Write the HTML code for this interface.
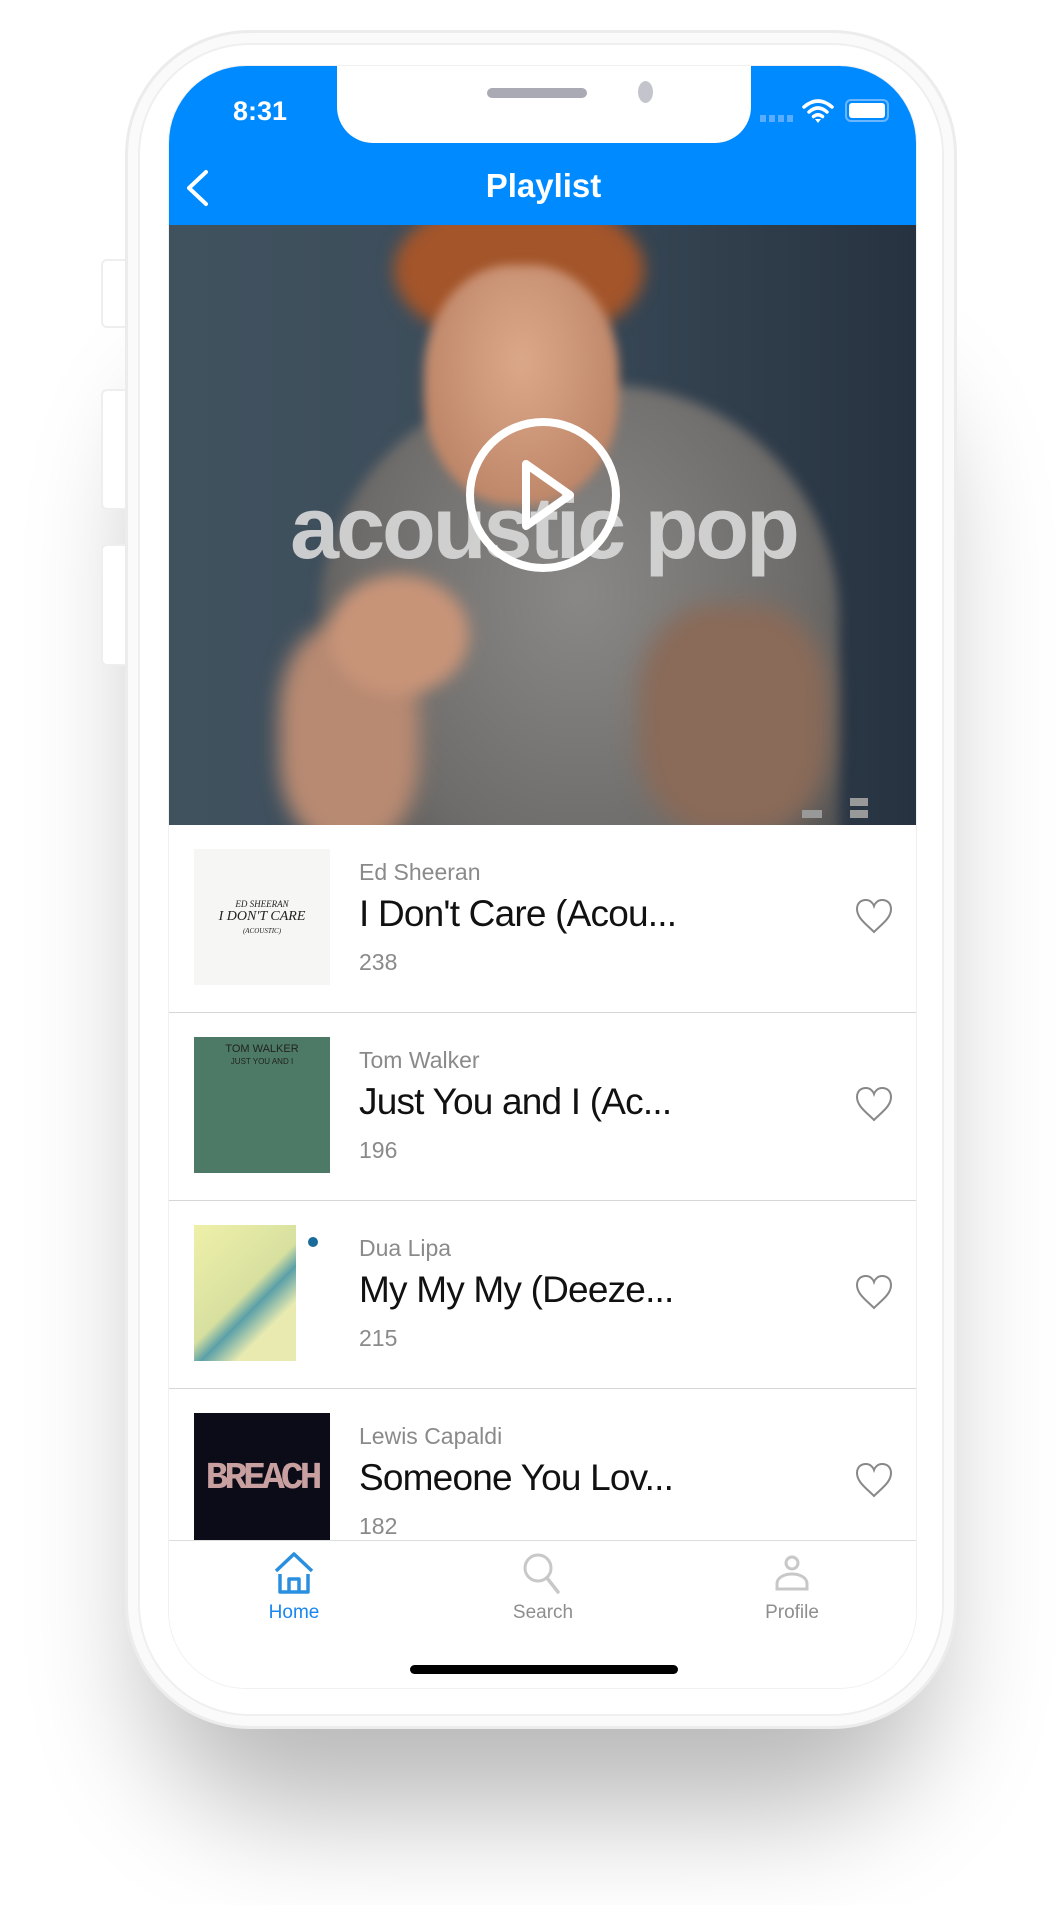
<!DOCTYPE html>
<html><head><meta charset="utf-8"><style>
*{margin:0;padding:0;box-sizing:border-box}
body{width:1059px;height:1905px;background:#fff;position:relative;overflow:hidden;font-family:"Liberation Sans",sans-serif}
.shadow{position:absolute;left:170px;top:300px;width:740px;height:1400px;border-radius:120px;box-shadow:0 90px 120px 20px rgba(0,0,0,0.28)}
.btn{position:absolute;left:101px;width:30px;background:#fff;border:2px solid #eee;border-radius:6px 0 0 6px}
.phone{position:absolute;left:125px;top:30px;width:832px;height:1699px;border-radius:125px;background:#fff;border:3px solid #ececec;box-shadow:inset 0 0 0 10px #fafafa, inset 0 0 0 12px #efefef}
.screen{position:absolute;left:168px;top:65px;width:749px;height:1624px;border-radius:78px;overflow:hidden;background:#fff;border:1px solid #f0f0f0}
.nav{position:absolute;left:0;top:0;width:749px;height:159px;background:#008aff}
.notch{position:absolute;left:168px;top:-2px;width:414px;height:79px;background:#fff;border-radius:0 0 36px 36px}
.hero{position:absolute;left:0;top:159px;width:749px;height:600px;overflow:hidden;background:linear-gradient(90deg,#41525f 0%,#3b4b59 50%,#263240 100%)}
.row{position:absolute;left:0;width:749px;height:188px;border-bottom:1.5px solid #d6d6d6}
.thumb{position:absolute;left:25px;top:24px;width:136px;height:136px}
.artist{position:absolute;left:190px;top:34px;font-size:23px;color:#8a8a8a}
.title{position:absolute;left:190px;top:68px;font-size:37px;color:#111;letter-spacing:-0.8px}
.count{position:absolute;left:190px;top:124px;font-size:23px;color:#8a8a8a}
.heart{position:absolute;left:685px;top:72px}
.tab{position:absolute;top:1474px;width:749px;height:150px;background:#fff;border-top:1.5px solid #ddd}
.tl{position:absolute;top:61px;font-size:19px;color:#8e8e8e;transform:translateX(-50%)}
</style></head><body>
<div class="shadow"></div>
<div class="btn" style="top:259px;height:69px"></div>
<div class="btn" style="top:389px;height:121px"></div>
<div class="btn" style="top:544px;height:122px"></div>
<div class="phone"></div>
<div class="screen">
 <div class="nav">
  <div class="notch"><div style="position:absolute;left:150px;top:24px;width:100px;height:10px;border-radius:5px;background:#aaaab4"></div><div style="position:absolute;left:301px;top:17px;width:15px;height:22px;border-radius:50%;background:#c4c4cc"></div></div>
  <div style="position:absolute;left:64px;top:30px;color:#fff;font-size:27px;font-weight:bold">8:31</div>
  <div style="position:absolute;left:591px;top:49px;width:36px;height:7px;background:repeating-linear-gradient(90deg,#5aacff 0 6px,transparent 6px 9px)"></div>
  <svg style="position:absolute;left:633px;top:32px" width="32" height="26" viewBox="0 0 32 26"><path d="M2 9Q16 -3 30 9M7 14Q16 6 25 14M11.5 18.5Q16 15 20.5 18.5" stroke="#fff" stroke-width="3.5" fill="none" stroke-linecap="round"/><path d="M13 21L16 25L19 21Z" fill="#fff"/></svg>
  <div style="position:absolute;left:676px;top:33px;width:44px;height:23px;border:2px solid #6cb6ff;border-radius:6px;padding:2px"><div style="width:100%;height:100%;background:#fff;border-radius:3px"></div></div>
  <svg style="position:absolute;left:15px;top:103px" width="26" height="38" viewBox="0 0 26 38"><path d="M22 3L5 19L22 35" stroke="#fff" stroke-width="4" fill="none" stroke-linecap="round" stroke-linejoin="round"/></svg>
  <div style="position:absolute;left:0;width:749px;top:101px;text-align:center;color:#fff;font-size:33px;font-weight:bold">Playlist</div>
 </div>
 <div class="hero">
  <div style="position:absolute;left:150px;top:160px;width:520px;height:520px;border-radius:45% 45% 10% 10%;background:radial-gradient(ellipse at 50% 40%,#8a8886,#6e6c6a 60%,#4a4a4a);filter:blur(6px)"></div>
  <div style="position:absolute;left:225px;top:-30px;width:250px;height:150px;border-radius:50%;background:#a4552a;filter:blur(8px)"></div>
  <div style="position:absolute;left:255px;top:40px;width:195px;height:240px;border-radius:45%;background:radial-gradient(ellipse at 50% 40%,#dca88a,#b47a5c);filter:blur(5px)"></div>
  <div style="position:absolute;left:110px;top:400px;width:140px;height:220px;border-radius:40%;background:#b88a72;filter:blur(10px)"></div>
  <div style="position:absolute;left:470px;top:380px;width:190px;height:230px;border-radius:40%;background:#8a6a58;filter:blur(12px)"></div>
  <div style="position:absolute;left:160px;top:350px;width:140px;height:120px;border-radius:50%;background:#c89478;filter:blur(8px)"></div>
  <div style="position:absolute;left:0;width:749px;top:252px;text-align:center;font-size:88px;font-weight:bold;color:rgba(215,215,215,0.92);letter-spacing:-3px">acoustic pop</div>
  <svg style="position:absolute;left:295px;top:191px" width="158" height="158" viewBox="0 0 158 158"><circle cx="79" cy="79" r="73" stroke="#fff" stroke-width="8" fill="none"/><path d="M62 48L106 79L62 110Z" stroke="#fff" stroke-width="8" fill="none" stroke-linejoin="round"/></svg>
  <div style="position:absolute;left:633px;top:585px;width:20px;height:8px;background:#999"></div>
  <div style="position:absolute;left:681px;top:573px;width:18px;height:8px;background:#999"></div>
  <div style="position:absolute;left:681px;top:585px;width:18px;height:8px;background:#999"></div>
 </div>
 <div class="row" style="top:759px">
  <div class="thumb" style="background:#f6f6f4"><div style="position:absolute;left:0;width:136px;top:50px;text-align:center;font-size:9px;font-family:'Liberation Serif',serif;color:#222;font-style:italic">ED SHEERAN<br><span style="font-size:14px">I DON'T CARE</span><br><span style="font-size:7px">(ACOUSTIC)</span></div></div>
  <div class="artist">Ed Sheeran</div><div class="title">I Don't Care (Acou...</div><div class="count">238</div>
  <svg class="heart" width="40" height="40" viewBox="0 0 40 40"><path d="M20 35C12 27 3 21 3 12C3 6 7 3 12 3C16 3 19 6 20 9C21 6 24 3 28 3C33 3 37 6 37 12C37 21 28 27 20 35Z" stroke="#888" stroke-width="2" fill="none"/></svg>
 </div>
 <div class="row" style="top:947px">
  <div class="thumb" style="background:#4d7a66"><div style="position:absolute;left:0;width:136px;top:6px;text-align:center;font-size:11px;color:#222">TOM WALKER<br><span style="font-size:8px">JUST YOU AND I</span></div></div>
  <div class="artist">Tom Walker</div><div class="title">Just You and I (Ac...</div><div class="count">196</div>
  <svg class="heart" width="40" height="40" viewBox="0 0 40 40"><path d="M20 35C12 27 3 21 3 12C3 6 7 3 12 3C16 3 19 6 20 9C21 6 24 3 28 3C33 3 37 6 37 12C37 21 28 27 20 35Z" stroke="#888" stroke-width="2" fill="none"/></svg>
 </div>
 <div class="row" style="top:1135px">
  <div class="thumb" style="background:#fff"><div style="position:absolute;left:0;top:0;width:102px;height:136px;background:linear-gradient(135deg,#eef0a8,#d8e0a0 50%,#5aa0a8 60%,#e8eab0 75%)"></div><div style="position:absolute;left:114px;top:12px;width:10px;height:10px;border-radius:50%;background:#1a6a9a"></div></div>
  <div class="artist">Dua Lipa</div><div class="title">My My My (Deeze...</div><div class="count">215</div>
  <svg class="heart" width="40" height="40" viewBox="0 0 40 40"><path d="M20 35C12 27 3 21 3 12C3 6 7 3 12 3C16 3 19 6 20 9C21 6 24 3 28 3C33 3 37 6 37 12C37 21 28 27 20 35Z" stroke="#888" stroke-width="2" fill="none"/></svg>
 </div>
 <div class="row" style="top:1323px;border:none">
  <div class="thumb" style="background:#0c0c18"><div style="position:absolute;left:0;width:136px;top:44px;text-align:center;font-size:38px;font-weight:bold;color:#c9a0a0;font-family:'Liberation Mono',monospace;letter-spacing:-4px">BREACH</div></div>
  <div class="artist">Lewis Capaldi</div><div class="title">Someone You Lov...</div><div class="count">182</div>
  <svg class="heart" width="40" height="40" viewBox="0 0 40 40"><path d="M20 35C12 27 3 21 3 12C3 6 7 3 12 3C16 3 19 6 20 9C21 6 24 3 28 3C33 3 37 6 37 12C37 21 28 27 20 35Z" stroke="#888" stroke-width="2" fill="none"/></svg>
 </div>
 <div class="tab">
  <svg style="position:absolute;left:104px;top:10px" width="42" height="44" viewBox="0 0 42 44"><path d="M3 20L21 3L39 20M7 23V41H35V23M16 41V28H26V41" stroke="#2b8fe0" stroke-width="3.5" fill="none" stroke-linejoin="round"/></svg>
  <div class="tl" style="left:125px;color:#1a86f0">Home</div>
  <svg style="position:absolute;left:352px;top:10px" width="42" height="44" viewBox="0 0 42 44"><circle cx="17" cy="17" r="13" stroke="#c8c8c8" stroke-width="3" fill="none"/><path d="M26 27L37 41" stroke="#c8c8c8" stroke-width="3.5" stroke-linecap="round"/></svg>
  <div class="tl" style="left:374px">Search</div>
  <svg style="position:absolute;left:602px;top:10px" width="42" height="44" viewBox="0 0 42 44"><circle cx="21" cy="12" r="6" stroke="#c8c8c8" stroke-width="3" fill="none"/><path d="M6 38V33C6 26 14 23 21 23C28 23 36 26 36 33V38Z" stroke="#c8c8c8" stroke-width="3" fill="none"/></svg>
  <div class="tl" style="left:623px">Profile</div>
  <div style="position:absolute;left:241px;top:124px;width:268px;height:9px;border-radius:5px;background:#000"></div>
 </div>
</div>
</body></html>
